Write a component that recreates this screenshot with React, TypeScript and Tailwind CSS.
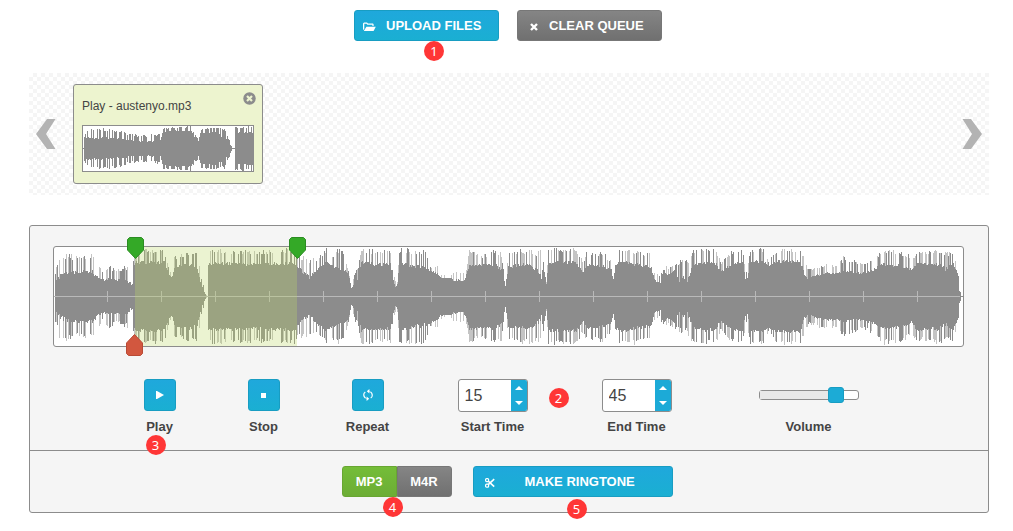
import React, { useState } from 'react';

// [x, body height, peak height], distances from the centre line
type Point = [number, number, number];

const TRACK_WIDTH = 909;
const PIXELS_PER_SECOND = 5.4;

const TRACK: Point[] = [
  [0, 0, 1], [1, 12, 25], [6, 18, 45], [20, 22, 42], [38, 22, 42], [42, 18, 38], [48, 15, 24], [55, 15, 32],
  [62, 15, 26], [70, 15, 30], [78, 10, 32], [80, 30, 40], [82, 32, 48], [110, 32, 47], [115, 20, 26],
  [118, 18, 20], [120, 28, 40], [138, 30, 46], [143, 25, 44], [147, 10, 20], [152, 0, 1], [153, 0, 0],
  [154, 31, 48], [200, 30, 46], [240, 31, 48], [243, 28, 40], [250, 20, 42], [255, 16, 40], [262, 25, 38],
  [272, 32, 48], [276, 30, 40], [283, 25, 48], [289, 25, 46], [294, 22, 26], [297, 8, 10], [301, 12, 25],
  [304, 14, 30], [307, 32, 48], [320, 30, 47], [336, 30, 47], [338, 20, 28], [341, 8, 15], [343, 12, 15],
  [345, 31, 48], [356, 29, 48], [372, 25, 47], [376, 25, 30], [383, 22, 30], [386, 18, 22], [396, 18, 20],
  [399, 15, 25], [409, 14, 25], [412, 20, 28], [415, 30, 48], [426, 30, 40], [439, 30, 47], [447, 25, 45],
  [451, 10, 12], [454, 28, 45], [466, 29, 48], [476, 29, 47], [486, 20, 47], [488, 12, 30], [489, 30, 35],
  [492, 12, 14], [494, 32, 48], [522, 32, 48], [529, 22, 35], [532, 30, 44], [549, 28, 45], [557, 25, 35],
  [559, 14, 18], [561, 30, 44], [569, 33, 48], [579, 30, 48], [597, 27, 43], [600, 15, 25], [606, 12, 20],
  [609, 26, 38], [613, 20, 28], [621, 26, 32], [624, 12, 35], [629, 18, 38], [633, 14, 38], [639, 30, 47],
  [649, 32, 48], [662, 30, 47], [666, 22, 35], [676, 30, 45], [688, 33, 48], [692, 11, 25], [696, 33, 48],
  [709, 33, 48], [714, 30, 35], [723, 33, 48], [746, 33, 48], [750, 20, 38], [754, 16, 28], [763, 20, 30],
  [773, 22, 33], [783, 22, 30], [789, 22, 40], [799, 22, 36], [809, 22, 32], [819, 25, 38], [829, 30, 48],
  [846, 28, 46], [858, 24, 40], [863, 32, 44], [876, 30, 45], [884, 30, 48], [891, 25, 45], [899, 31, 44],
  [904, 20, 28], [905, 5, 8], [907, 0, 1], [909, 0, 1],
];

const THUMB: Point[] = [
  [0, 0, 0], [1, 8, 12], [5, 9, 21], [20, 9, 20], [37, 8, 19], [43, 7, 15], [57, 6, 13], [70, 6, 14],
  [77, 7, 15], [79, 15, 20], [90, 17, 21], [108, 17, 22], [111, 11, 14], [115, 7, 10], [117, 14, 20],
  [133, 15, 21], [141, 9, 20], [144, 7, 12], [147, 3, 7], [149, 0, 1], [151, 0, 0], [152, 14, 22], [170, 15, 22],
];

function random(seed: number) {
  let s = seed;
  return () => {
    s = (s * 16807) % 2147483647;
    return s / 2147483647;
  };
}

function buildWave(points: Point[], width: number, centre: number, seed: number) {
  const rand = random(seed);
  let dark = '';
  let light = '';
  let i = 0;
  for (let x = 0; x < width; x++) {
    while (i < points.length - 2 && points[i + 1][0] <= x) i++;
    const [x0, b0, p0] = points[i];
    const [x1, b1, p1] = points[i + 1];
    const t = Math.min(1, (x - x0) / (x1 - x0));
    const body = b0 + (b1 - b0) * t;
    const peak = p0 + (p1 - p0) * t;
    // both halves of a column spike together
    const kind = rand();
    const side = () => {
      const base = body + (peak - body) * rand() * 0.2;
      const spike = body + (peak - body) * (0.7 + rand() * 0.3);
      return {
        dark: Math.round(kind > 0.72 ? spike : base),
        light: Math.round(kind > 0.45 ? spike : base),
      };
    };
    const up = side();
    const down = side();
    dark += `M${x} ${centre - up.dark}h1V${centre + 1 + down.dark}h-1z`;
    light += `M${x} ${centre - up.light}h1V${centre + 1 + down.light}h-1z`;
  }
  return { dark, light };
}

const trackWave = buildWave(TRACK, TRACK_WIDTH, 49, 77);
const thumbWave = buildWave(THUMB, 170, 22, 31);
const ticks = Array.from({ length: 16 }, (_, i) => 53 + i * 54);

const blue = 'border border-[#189dc2] bg-linear-to-b from-[#1fa8dc] to-[#1aafd2] text-white';
const gray = 'border border-[#777] bg-linear-to-b from-[#858585] to-[#707070] text-white';

const FolderIcon = () => (
  <svg width="13" height="10" viewBox="0 0 13 10" fill="currentColor" aria-hidden="true">
    <path d="M0 8V1.5L1 .5h3l1 1h5l.6.8V4H9.4V2.7H4.4l-1-1H1.3V7z" />
    <path d="M3.4 4.8H12.8L10.6 9H.8z" />
  </svg>
);

const CrossIcon = () => (
  <svg width="8" height="8" viewBox="0 0 8 8" stroke="currentColor" aria-hidden="true">
    <path d="m1 1 6 6M7 1 1 7" strokeWidth="2.4" />
  </svg>
);

const ScissorsIcon = () => (
  <svg width="10" height="10" viewBox="0 0 10 10" fill="none" stroke="currentColor" aria-hidden="true">
    <rect x=".6" y=".6" width="3" height="3" rx="1" strokeWidth="1.2" />
    <rect x=".6" y="6.2" width="3" height="3" rx="1" strokeWidth="1.2" />
    <path d="m3.2 3.2 6 5.4M3.2 6.6l6-5.4" strokeWidth="1.6" />
  </svg>
);

const RepeatIcon = () => (
  <svg width="10" height="12" viewBox="0 0 10 12" fill="none" stroke="currentColor" aria-hidden="true">
    <path d="M2.6 9.2C.2 7.4.1 4.2 2.3 2.9M5 2.3h1.5M7.4 2.8c2.4 1.8 2.5 5 .3 6.3M5 9.7H3.5" strokeWidth="1.2" />
    <path d="M6.4 0v4.6L3.8 2.3zM3.6 7.4V12l2.6-2.3z" fill="currentColor" stroke="none" />
  </svg>
);

const ArrowIcon = ({ className = '' }: { className?: string }) => (
  <svg className={className} width="20" height="30" viewBox="0 0 20 30" fill="#b3b3b3" aria-hidden="true">
    <path d="M11 0h8.5L10 15l9.5 15H11L0 15z" />
  </svg>
);

const Badge = ({ value, className }: { value: number; className: string }) => (
  <span
    className={`absolute flex h-5 w-5 items-center justify-center rounded-full bg-[#ff3636] font-['Noto_Sans','Open_Sans',sans-serif] text-[13px] leading-5 font-normal text-white ${className}`}
  >
    {value}
  </span>
);

interface ControlProps {
  label: string;
  children: React.ReactNode;
}

const Control: React.FC<ControlProps> = ({ label, children }) => (
  <div className="relative flex w-26 flex-col items-center">
    <button aria-label={label} className={`flex h-8 w-8 items-center justify-center rounded-[3px] ${blue}`}>
      {children}
    </button>
    <span className="mt-1.5 leading-5 font-bold">{label}</span>
    {label === 'Play' && <Badge value={3} className="top-14 left-[38px]" />}
  </div>
);

interface TimeFieldProps {
  id: string;
  label: string;
  value: number;
  onChange: (value: number) => void;
}

const TimeField: React.FC<TimeFieldProps> = ({ id, label, value, onChange }) => (
  <div className="flex w-36 flex-col items-center">
    <div className="flex h-[33px] w-[70px] overflow-hidden rounded-[3px] border border-[#8c8c8c] bg-white">
      <input
        id={id}
        type="text"
        value={value}
        onChange={e => onChange(Number(e.target.value) || 0)}
        className="w-full min-w-0 flex-1 pl-1.5 text-base text-[#444] outline-none"
      />
      <div className="flex w-4 flex-col bg-[#1caad7] text-white">
        <button aria-label={`${label} up`} onClick={() => onChange(value + 1)} className="flex flex-1 items-center justify-center">
          <svg width="8" height="4" viewBox="0 0 8 4" fill="currentColor"><path d="M0 4h8L4 0z" /></svg>
        </button>
        <button aria-label={`${label} down`} onClick={() => onChange(value - 1)} className="flex flex-1 items-center justify-center">
          <svg width="8" height="4" viewBox="0 0 8 4" fill="currentColor"><path d="M0 0h8L4 4z" /></svg>
        </button>
      </div>
    </div>
    <label htmlFor={id} className="mt-[5px] leading-5 font-bold">{label}</label>
  </div>
);

const Queue = () => (
  <section className="mt-8 flex h-[122px] items-center bg-[repeating-conic-gradient(#f5f5f5_0_25%,#fff_0_50%)] bg-size-[8px_8px] px-[7px]">
    <button aria-label="Previous">
      <ArrowIcon />
    </button>
    <div className="ml-[17px] h-[100px] w-[190px] rounded-[3px] border border-[#8c8c8c] bg-[#edf4cf] px-2">
      <div className="flex h-10 items-start justify-between">
        <span className="mt-3 text-xs leading-[18px]">Play - austenyo.mp3</span>
        <button aria-label="Remove" className="-mr-0.5 mt-[7px]">
          <svg width="13" height="13" viewBox="0 0 13 13">
            <circle cx="6.5" cy="6.5" r="6.2" fill="#8c8c8c" />
            <path d="m4 4 5 5M9 4 4 9" stroke="#edf4cf" strokeWidth="2.2" />
          </svg>
        </button>
      </div>
      <div className="border border-[#8c8c8c] bg-white">
        <svg className="block h-[45px] w-full" viewBox="0 0 170 45" preserveAspectRatio="none" shapeRendering="crispEdges">
          <path d={thumbWave.light} fill="#8c8c8c" />
        </svg>
      </div>
    </div>
    <button aria-label="Next" className="ml-auto">
      <ArrowIcon className="rotate-180" />
    </button>
  </section>
);

const Waveform = ({ start, end }: { start: number; end: number }) => {
  const toPercent = (seconds: number) => `${(seconds * PIXELS_PER_SECOND * 100) / TRACK_WIDTH}%`;

  return (
    <div className="relative rounded-[3px] border border-[#8c8c8c] bg-white">
      <svg className="block h-[99px] w-full" viewBox="0 0 909 99" preserveAspectRatio="none" shapeRendering="crispEdges">
        <path d={trackWave.light} fill="#c4c4c4" />
        <path d={trackWave.dark} fill="#8c8c8c" />
        <path d={`M0 49h906v1H0z${ticks.map(x => `M${x} 44h1v11h-1z`).join('')}`} fill="#b9b9b9" />
      </svg>
      <div
        className="absolute inset-y-0 bg-[#bfd969]/31"
        style={{ left: toPercent(start), width: toPercent(end - start) }}
      />
      {[start, end].map((time, i) => (
        <button key={i} aria-label={i ? 'End marker' : 'Start marker'} className="absolute -top-2.5 -ml-2" style={{ left: toPercent(time) }}>
          <svg width="18" height="22" viewBox="0 0 18 22">
            <path d="M2.5.5h12l2 2V13L8.5 21.5.5 13V2.5z" fill="#34a927" stroke="#2b8c22" strokeLinejoin="round" />
          </svg>
        </button>
      ))}
      <button aria-label="Playhead" className="absolute -bottom-2.5 -translate-x-1/2" style={{ left: toPercent(start) }}>
        <svg width="18" height="22" viewBox="0 0 18 22">
          <path d="M8.5.5l8 8.5v10.5l-2 2h-12l-2-2V9z" fill="#d2573f" stroke="#b94a35" strokeLinejoin="round" />
        </svg>
      </button>
    </div>
  );
};

const App: React.FC = () => {
  const [start, setStart] = useState(15);
  const [end, setEnd] = useState(45);
  const [volume, setVolume] = useState(83);
  const [format, setFormat] = useState('MP3');

  return (
    <main className="min-h-screen bg-white pt-2.5 pr-6 pl-[29px] font-['Liberation_Sans',Arial,sans-serif] text-[13px] text-[#444]">
      <div className="flex justify-center gap-[18px] pr-0.5">
        <button className={`relative flex h-[31px] w-[145px] items-center rounded-[3px] font-bold ${blue}`}>
          <span className="flex w-[31px] pt-0.5 pl-2"><FolderIcon /></span>
          UPLOAD FILES
          <Badge value={1} className="top-[30px] left-[69px]" />
        </button>
        <button className={`flex h-[31px] w-[145px] items-center rounded-[3px] font-bold ${gray}`}>
          <span className="flex w-[31px] justify-center pt-0.5"><CrossIcon /></span>
          CLEAR QUEUE
        </button>
      </div>

      <Queue />

      <section className="mt-[30px] rounded-[3px] border border-[#8c8c8c] bg-[#f5f5f5]">
        <div className="pt-5 pr-6 pl-[23px]">
          <Waveform start={start} end={end} />
        </div>

        <div className="relative mt-8 flex justify-center pr-0.5 pb-[13px]">
          <Control label="Play">
            <svg width="8" height="8" viewBox="0 0 8 8" fill="currentColor"><path d="M0 0h1l7 4-7 4H0z" /></svg>
          </Control>
          <Control label="Stop">
            <span className="h-[5px] w-[5px] bg-white" />
          </Control>
          <Control label="Repeat">
            <RepeatIcon />
          </Control>
          <div className="relative ml-px">
            <TimeField id="start" label="Start Time" value={start} onChange={setStart} />
            <Badge value={2} className="top-[9px] -right-1" />
          </div>
          <TimeField id="end" label="End Time" value={end} onChange={setEnd} />
          <div className="flex w-[200px] flex-col items-center">
            <div className="relative my-[11px] h-2.5 w-[100px] rounded-[3px] border border-[#8c8c8c] bg-white">
              <div className="h-full bg-[#e8e8e8]" style={{ width: `${volume}%` }} />
              <input
                id="volume"
                type="range"
                value={volume}
                onChange={e => setVolume(Number(e.target.value))}
                className="absolute -inset-x-px -top-1 h-4 w-[100px] appearance-none bg-transparent [&::-webkit-slider-thumb]:h-4 [&::-webkit-slider-thumb]:w-4 [&::-webkit-slider-thumb]:appearance-none [&::-webkit-slider-thumb]:rounded-[3px] [&::-webkit-slider-thumb]:border [&::-webkit-slider-thumb]:border-[#189dc2] [&::-webkit-slider-thumb]:bg-[#1cabd6]"
              />
            </div>
            <label htmlFor="volume" className="mt-1.5 leading-5 font-bold">Volume</label>
          </div>
        </div>

        <div className="flex justify-center gap-[21px] border-t border-[#8c8c8c] pt-[15px] pr-1 pb-[15px]">
          <div className="relative flex">
            {['MP3', 'M4R'].map(name => (
              <button
                key={name}
                aria-pressed={format === name}
                onClick={() => setFormat(name)}
                className={`h-[31px] w-[55px] font-bold ${name === 'MP3' ? 'rounded-l-[3px]' : 'rounded-r-[3px]'} ${format === name ? 'border border-[#68a632] bg-linear-to-b from-[#74bd38] to-[#6cad35] text-white' : gray}`}
              >
                {name}
              </button>
            ))}
            <Badge value={4} className="top-[31px] left-[41px]" />
          </div>
          <button className={`relative flex h-[31px] w-[200px] items-center rounded-[3px] font-bold ${blue}`}>
            <span className="flex w-[51px] pt-0.5 pl-[11px]"><ScissorsIcon /></span>
            MAKE RINGTONE
            <Badge value={5} className="top-8 left-[93px]" />
          </button>
        </div>
      </section>
    </main>
  );
};

export default App;
